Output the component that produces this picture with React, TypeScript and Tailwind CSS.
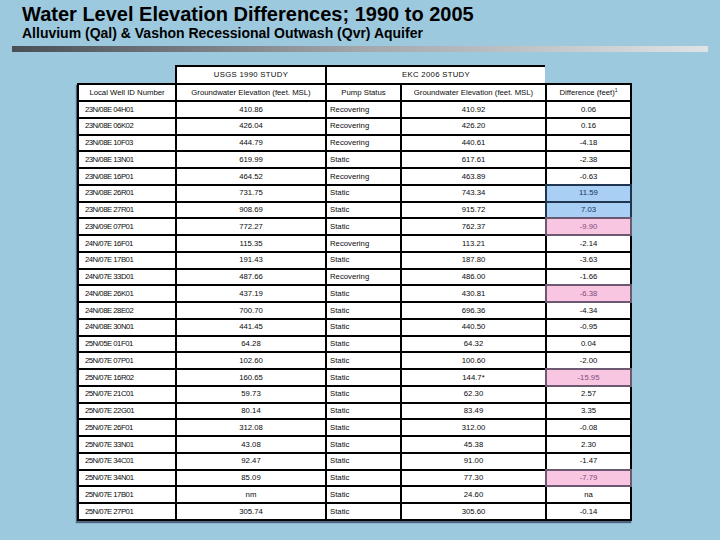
const ROWS = [
  { id: "23N/08E 04H01", usgs: "410.86", pump: "Recovering", ekc: "410.92", diff: "0.06" },
  { id: "23N/08E 06K02", usgs: "426.04", pump: "Recovering", ekc: "426.20", diff: "0.16" },
  { id: "23N/08E 10F03", usgs: "444.79", pump: "Recovering", ekc: "440.61", diff: "-4.18" },
  { id: "23N/08E 13N01", usgs: "619.99", pump: "Static", ekc: "617.61", diff: "-2.38" },
  { id: "23N/08E 16P01", usgs: "464.52", pump: "Recovering", ekc: "463.89", diff: "-0.63" },
  { id: "23N/08E 26R01", usgs: "731.75", pump: "Static", ekc: "743.34", diff: "11.59", hl: "up" },
  { id: "23N/08E 27R01", usgs: "908.69", pump: "Static", ekc: "915.72", diff: "7.03", hl: "up" },
  { id: "23N/09E 07P01", usgs: "772.27", pump: "Static", ekc: "762.37", diff: "-9.90", hl: "down" },
  { id: "24N/07E 16F01", usgs: "115.35", pump: "Recovering", ekc: "113.21", diff: "-2.14" },
  { id: "24N/07E 17B01", usgs: "191.43", pump: "Static", ekc: "187.80", diff: "-3.63" },
  { id: "24N/07E 33D01", usgs: "487.66", pump: "Recovering", ekc: "486.00", diff: "-1.66" },
  { id: "24N/08E 26K01", usgs: "437.19", pump: "Static", ekc: "430.81", diff: "-6.38", hl: "down" },
  { id: "24N/08E 28E02", usgs: "700.70", pump: "Static", ekc: "696.36", diff: "-4.34" },
  { id: "24N/08E 30N01", usgs: "441.45", pump: "Static", ekc: "440.50", diff: "-0.95" },
  { id: "25N/05E 01F01", usgs: "64.28", pump: "Static", ekc: "64.32", diff: "0.04" },
  { id: "25N/07E 07P01", usgs: "102.60", pump: "Static", ekc: "100.60", diff: "-2.00" },
  { id: "25N/07E 16R02", usgs: "160.65", pump: "Static", ekc: "144.7*", diff: "-15.95", hl: "down" },
  { id: "25N/07E 21C01", usgs: "59.73", pump: "Static", ekc: "62.30", diff: "2.57" },
  { id: "25N/07E 22G01", usgs: "80.14", pump: "Static", ekc: "83.49", diff: "3.35" },
  { id: "25N/07E 26F01", usgs: "312.08", pump: "Static", ekc: "312.00", diff: "-0.08" },
  { id: "25N/07E 33N01", usgs: "43.08", pump: "Static", ekc: "45.38", diff: "2.30" },
  { id: "25N/07E 34C01", usgs: "92.47", pump: "Static", ekc: "91.00", diff: "-1.47" },
  { id: "25N/07E 34N01", usgs: "85.09", pump: "Static", ekc: "77.30", diff: "-7.79", hl: "down" },
  { id: "25N/07E 17B01", usgs: "nm", pump: "Static", ekc: "24.60", diff: "na" },
  { id: "25N/07E 27P01", usgs: "305.74", pump: "Static", ekc: "305.60", diff: "-0.14" },
];

const cell = "bg-white h-[14.75px] flex items-center text-[7.75px] leading-none text-[#0a0a0a]";
const head = "bg-white h-[15px] flex items-center justify-center text-[7.75px] leading-none text-[#0a0a0a]";

function diffClass(hl?: string) {
  if (hl === "up") return "bg-[#a9cff5] text-[#1d3358] shadow-[0_0_0_2px_#1f3550]";
  if (hl === "down") return "bg-[#f8c6e1] text-[#7d4d7d] shadow-[0_0_0_2px_#6d5872]";
  return "bg-white text-[#0a0a0a]";
}

export default function App() {
  return (
    <div className="w-[720px] h-[540px] overflow-hidden bg-[#9dc9de] font-['Liberation_Sans',Arial,sans-serif] text-black">
      {/* Title */}
      <div className="pl-[22px] pt-[4px]">
        <h1 className="text-[20px] leading-[20px] font-bold">
          Water Level Elevation Differences; 1990 to 2005
        </h1>
        <p className="mt-[2px] text-[14px] leading-[14px] font-bold">
          Alluvium (Qal) &amp; Vashon Recessional Outwash (Qvr) Aquifer
        </p>
      </div>
      <div className="mx-[12px] mt-[6px] h-[6px] bg-gradient-to-r from-[#4a4f56] via-[#a3a7ab] to-[#dfe3e5]" />

      {/* Table */}
      <div className="ml-[77px] mt-[13px] w-fit">
        <div className="ml-[98px] flex w-fit border-t-2 border-l-2 border-black text-[7.75px] leading-none tracking-[0.3px] text-[#0a0a0a]">
          <div className="w-[148px] h-[16px] bg-white flex items-center justify-center">
            USGS 1990 STUDY
          </div>
          <div className="w-[220px] h-[16px] bg-white border-l-2 border-black flex items-center justify-center">
            EKC 2006 STUDY
          </div>
        </div>

        <div className="grid grid-cols-[96px_148px_73px_143px_83px] gap-[2px] bg-black p-[2px] w-fit shadow-[-1px_2px_1px_rgba(10,20,50,0.55)]">
          <div className={head}>Local Well ID Number</div>
          <div className={head}>Groundwater Elevation (feet. MSL)</div>
          <div className={head}>Pump Status</div>
          <div className={head}>Groundwater Elevation (feet. MSL)</div>
          <div className={head}>
            Difference (feet)<sup className="text-[5px]">1</sup>
          </div>

          {ROWS.map((r, i) => (
            <div key={i} className="contents">
              <div className={`${cell} pl-[6px] tracking-[-0.5px]`}>{r.id}</div>
              <div className={`${cell} justify-center`}>{r.usgs}</div>
              <div className={`${cell} pl-[3px]`}>{r.pump}</div>
              <div className={`${cell} justify-center`}>{r.ekc}</div>
              <div className={`h-[14.75px] flex items-center justify-center text-[7.75px] leading-none ${diffClass(r.hl)}`}>
                {r.diff}
              </div>
            </div>
          ))}
        </div>
      </div>
    </div>
  );
}
